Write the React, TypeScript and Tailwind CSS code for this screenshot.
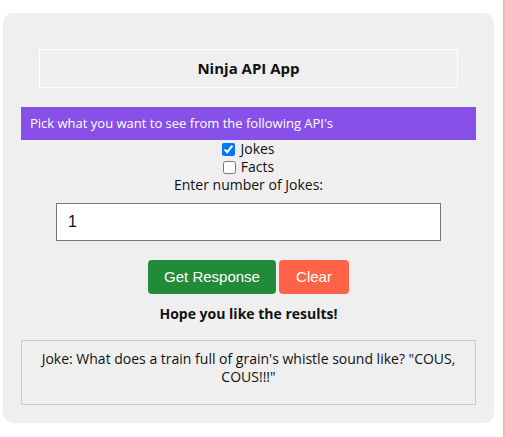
import { useState } from 'react';

export default function App() {
  const [jokes, setJokes] = useState(true);
  const [facts, setFacts] = useState(false);
  const [count, setCount] = useState('1');

  return (
    <div className="min-h-screen bg-white border-r-2 border-[#f9b89a] font-['Open_Sans',sans-serif] text-[#111]">
      <div className="pt-[13px] pl-[3px]">
        <div className="w-[491px] h-[410px] rounded-[10px] bg-[#efefef] pt-[36px]">
          {/* Title */}
          <div className="mx-[36px] h-[39px] border border-white flex items-center justify-center text-[15px] font-bold">
            Ninja API App
          </div>

          {/* Banner */}
          <div className="mx-[18px] mt-[19px] h-[33px] bg-[#8750e8] text-white text-[13px] flex items-center pl-[9px]">
            Pick what you want to see from the following API's
          </div>

          {/* Options */}
          <div className="flex flex-col items-center text-[14px] leading-[18px]">
            <label className="flex items-center gap-[5px]">
              <input type="checkbox" checked={jokes} onChange={(e) => setJokes(e.target.checked)} className="w-[13px] h-[13px] accent-[#0075ff]" />
              Jokes
            </label>
            <label className="flex items-center gap-[5px]">
              <input type="checkbox" checked={facts} onChange={(e) => setFacts(e.target.checked)} className="w-[13px] h-[13px]" />
              Facts
            </label>
            <span>Enter number of Jokes:</span>
          </div>

          <div className="flex justify-center mt-[9px]">
            <input
              value={count}
              onChange={(e) => setCount(e.target.value)}
              className="w-[385px] h-[38px] bg-white border border-[#767676] px-[11px] text-[16px] font-['Liberation_Sans',Arial,sans-serif] outline-none"
            />
          </div>

          <div className="flex justify-center gap-[3px] mt-[19px]">
            <button className="w-[128px] h-[34px] rounded-[4px] bg-[#228b3a] text-white text-[15px] font-['Liberation_Sans',Arial,sans-serif]">
              Get Response
            </button>
            <button className="w-[70px] h-[34px] rounded-[4px] bg-[#ff6347] text-white text-[15px] font-['Liberation_Sans',Arial,sans-serif]">
              Clear
            </button>
          </div>

          <p className="text-center text-[14px] font-bold mt-[9px]">Hope you like the results!</p>

          <div className="mx-[18px] mt-[16px] h-[65px] border border-[#cccccc] px-[6px] pt-[9px] text-center text-[14px] leading-[18px]">
            Joke: What does a train full of grain's whistle sound like? "COUS, COUS!!!"
          </div>
        </div>
      </div>
    </div>
  );
}
